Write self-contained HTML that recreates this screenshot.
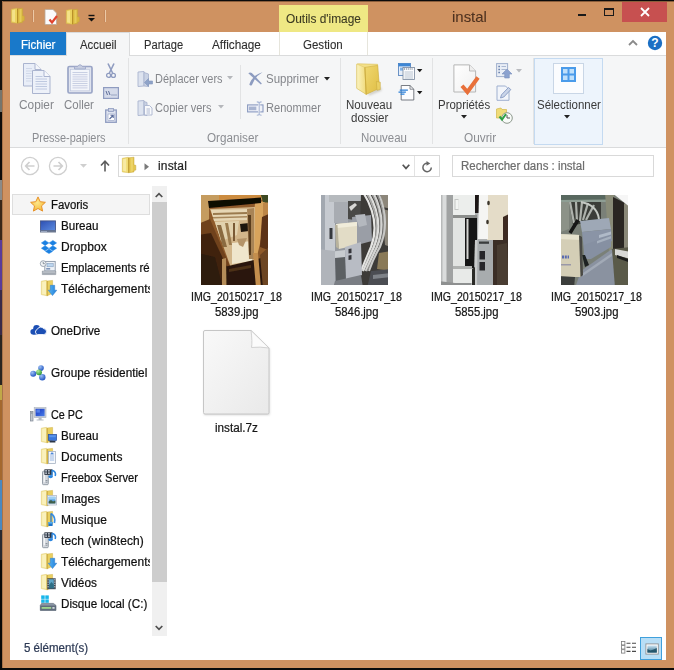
<!DOCTYPE html>
<html lang="fr">
<head>
<meta charset="utf-8">
<title>instal</title>
<style>
html,body{margin:0;padding:0;}
body{width:674px;height:670px;overflow:hidden;background:#0a0a0a;font-family:"Liberation Sans",sans-serif;font-size:12px;position:relative;}
.a{position:absolute;}
.t{position:absolute;white-space:nowrap;transform-origin:0 0;-webkit-text-stroke:0.22px;font-family:"Liberation Sans",sans-serif;}
svg{position:absolute;overflow:visible;}
#win{position:absolute;left:2px;top:1px;width:672px;height:667px;background:#cf9261;}
#client{position:absolute;left:10px;top:32px;width:656px;height:628px;background:#fff;overflow:hidden;}
</style>
</head>
<body>
<div id="desk" class="a" style="left:0;top:0;width:674px;height:670px;background:#0b0b0b">
<div class="a" style="left:0px;top:0px;width:2px;height:90px;background:#15100c;"></div>
<div class="a" style="left:0px;top:90px;width:2px;height:22px;background:#75756d;"></div>
<div class="a" style="left:0px;top:112px;width:2px;height:68px;background:#0e0c0a;"></div>
<div class="a" style="left:0px;top:180px;width:2px;height:20px;background:#8a8a88;"></div>
<div class="a" style="left:0px;top:200px;width:2px;height:40px;background:#3a2618;"></div>
<div class="a" style="left:0px;top:240px;width:2px;height:50px;background:#5a3a9a;"></div>
<div class="a" style="left:0px;top:290px;width:2px;height:45px;background:#3a2a48;"></div>
<div class="a" style="left:0px;top:335px;width:2px;height:50px;background:#2a2420;"></div>
<div class="a" style="left:0px;top:385px;width:2px;height:15px;background:#c0a848;"></div>
<div class="a" style="left:0px;top:400px;width:2px;height:80px;background:#a4682e;"></div>
<div class="a" style="left:0px;top:480px;width:2px;height:50px;background:#4a88c0;"></div>
<div class="a" style="left:0px;top:530px;width:2px;height:30px;background:#2a2a30;"></div>
<div class="a" style="left:0px;top:560px;width:2px;height:110px;background:#080808;"></div>
</div>
<div id="win"></div>
<div class="a" style="left:2px;top:1px;width:672px;height:1px;background:#8a5e3c;"></div>
<div class="a" style="left:2px;top:1px;width:1px;height:667px;background:#a8734a;"></div>
<div id="titlebar" class="a" style="left:0;top:0;width:674px;height:32px">
<svg class="a" style="left:11px;top:8px" width="13.5" height="15.5" viewBox="0 0 13.5 15.5" ><path d="M0.3 1.2 L5.9 0.3 L6.5 0.9 V15.2 L0.3 14.4 Z" fill="#ecd25e" stroke="#d2b64e" stroke-width="0.5"/>
<path d="M1.1 2.2 L4.0 1.4 V14.0 L1.1 13.3 Z" fill="#f4e288"/>
<path d="M6.5 0.8 L11.6 0.2 V7.8 L13.3 8.1 V12.7 L11.6 13.0 L11.6 14.4 L6.5 15.2 Z" fill="#d9b63e" stroke="#c6a63a" stroke-width="0.5"/>
<path d="M8.4 1.2 L10.5 0.9 V13.6 L8.4 14.4 Z" fill="#e6cc5a"/>
<path d="M6.5 0.8 V15.2" stroke="#b8902a" stroke-width="1"/></svg><div class="a" style="left:32px;top:10px;width:1px;height:12px;background:#c5875a"></div><div class="a" style="left:33px;top:10px;width:1px;height:12px;background:#ecc9a6"></div><svg class="a" style="left:44px;top:9px" width="14" height="16" viewBox="0 0 14 16" ><path d="M1 0.5 H9 L12.5 4 V15.5 H1 Z" fill="#fbfbfb" stroke="#b9a89a" stroke-width="0.8"/>
<path d="M5.5 10.5 L8 13.5 L13 7" stroke="#e0452f" stroke-width="2.2" fill="none"/></svg><svg class="a" style="left:65.5px;top:8.5px" width="13.5" height="15.5" viewBox="0 0 13.5 15.5" ><path d="M0.3 1.2 L5.9 0.3 L6.5 0.9 V15.2 L0.3 14.4 Z" fill="#ecd25e" stroke="#d2b64e" stroke-width="0.5"/>
<path d="M1.1 2.2 L4.0 1.4 V14.0 L1.1 13.3 Z" fill="#f4e288"/>
<path d="M6.5 0.8 L11.6 0.2 V7.8 L13.3 8.1 V12.7 L11.6 13.0 L11.6 14.4 L6.5 15.2 Z" fill="#d9b63e" stroke="#c6a63a" stroke-width="0.5"/>
<path d="M8.4 1.2 L10.5 0.9 V13.6 L8.4 14.4 Z" fill="#e6cc5a"/>
<path d="M6.5 0.8 V15.2" stroke="#b8902a" stroke-width="1"/></svg><svg class="a" style="left:88px;top:15px" width="7" height="7" viewBox="0 0 7 7" ><path d="M0.5 0.5 H6.5" stroke="#111" stroke-width="1.4"/><path d="M0 3 H7 L3.5 6.5 Z" fill="#111"/></svg><div class="a" style="left:104px;top:10px;width:1px;height:12px;background:#c5875a"></div><div class="a" style="left:105px;top:10px;width:1px;height:12px;background:#ecc9a6"></div>
<div class="a" style="left:279px;top:5px;width:89px;height:27px;background:#efe884;"></div>
<span class="t " style="left:286.0px;top:10.6px;font-size:12px;line-height:16px;color:#3c3a22;transform:scaleX(0.990);-webkit-text-stroke:0.1px;">Outils d'image</span>
<span class="t " style="left:452.0px;top:6.5px;font-size:15px;line-height:20px;color:#4e3220;transform:scaleX(0.997);-webkit-text-stroke:0.1px;">instal</span>
<div class="a" style="left:578px;top:14px;width:8px;height:2px;background:#1a1a1a;"></div>
<div class="a" style="left:604px;top:8px;width:10px;height:8px;box-sizing:border-box;border:1px solid #1a1a1a;border-top-width:2px;"></div>
<div class="a" style="left:622px;top:2px;width:45px;height:20px;background:#c75050;"></div>
<svg class="a" style="left:640px;top:7px" width="10" height="10" viewBox="0 0 10 10" ><path d="M1 1 L9 9 M9 1 L1 9" stroke="#fff" stroke-width="1.8" fill="none"/></svg>
</div>
<div id="client"></div>
<div id="tabs" class="a" style="left:0;top:0;width:674px;height:56px">
<div class="a" style="left:10px;top:32px;width:56px;height:23px;background:#1979ca;"></div>
<span class="t " style="left:21.1px;top:36.5px;font-size:12px;line-height:16px;color:#ffffff;transform:scaleX(0.955);">Fichier</span>
<div class="a" style="left:66px;top:32px;width:64px;height:24px;background:#f5f6f7;box-sizing:border-box;border:1px solid #dadbdc;border-bottom:none;"></div>
<span class="t " style="left:80.0px;top:37.0px;font-size:12px;line-height:16px;color:#2e2e2e;transform:scaleX(0.944);-webkit-text-stroke:0.1px;">Accueil</span>
<span class="t " style="left:144.0px;top:37.0px;font-size:12px;line-height:16px;color:#2e2e2e;transform:scaleX(0.930);-webkit-text-stroke:0.1px;">Partage</span>
<span class="t " style="left:212.0px;top:37.0px;font-size:12px;line-height:16px;color:#2e2e2e;transform:scaleX(0.982);-webkit-text-stroke:0.1px;">Affichage</span>
<div class="a" style="left:279px;top:32px;width:89px;height:23px;background:#ffffff;box-sizing:border-box;border-left:1px solid #e6e5dc;border-right:1px solid #e6e5dc;"></div>
<span class="t " style="left:303.2px;top:37.0px;font-size:12px;line-height:16px;color:#2e2e2e;transform:scaleX(0.960);-webkit-text-stroke:0.1px;">Gestion</span>
<svg class="a" style="left:628px;top:39px" width="10" height="7" viewBox="0 0 10 7" ><path d="M1 6 L5 2 L9 6" stroke="#8a8a8a" stroke-width="1.8" fill="none"/></svg>
<svg class="a" style="left:647px;top:35px" width="16" height="16" viewBox="0 0 16 16" ><circle cx="8" cy="8" r="7.2" fill="#1b6fc4"/><text x="8" y="12.4" font-family="Liberation Sans" font-weight="bold" font-size="12" fill="#fff" text-anchor="middle">?</text></svg>
</div>
<div id="ribbon" class="a" style="left:0;top:0;width:674px;height:148px">
<div class="a" style="left:10px;top:55px;width:656px;height:93px;background:#f5f6f7;box-sizing:border-box;border-top:1px solid #dadbdc;border-bottom:1px solid #dadbdc;"></div>
<div class="a" style="left:66px;top:55px;width:64px;height:1px;background:#f5f6f7;"></div>
<div class="a" style="left:66px;top:55px;width:1px;height:1px;background:#dadbdc;"></div>
<div class="a" style="left:129px;top:55px;width:1px;height:1px;background:#dadbdc;"></div>
<div class="a" style="left:128px;top:58px;width:1px;height:86px;background:#e2e3e4;"></div>
<div class="a" style="left:340px;top:58px;width:1px;height:86px;background:#e2e3e4;"></div>
<div class="a" style="left:432px;top:58px;width:1px;height:86px;background:#e2e3e4;"></div>
<div class="a" style="left:533px;top:58px;width:1px;height:86px;background:#e2e3e4;"></div>
<div class="a" style="left:240px;top:65px;width:1px;height:54px;background:#e2e3e4;"></div>
<svg class="a" style="left:23px;top:63px" width="28" height="31" viewBox="0 0 28 31" ><path d="M0.5 0.5 H12 L18 6.5 V23 H0.5 Z" fill="#e9eef8" stroke="#aab4cf" stroke-width="1"/>
<path d="M12 0.5 V6.5 H18" fill="#f4f6fb" stroke="#aab4cf" stroke-width="1"/>
<path d="M3 5.5 H9 M3 8 H9 M3 10.5 H8.5 M3 13 H8.5 M3 15.5 H8.5 M3 18 H8.5" stroke="#cdd5e6" stroke-width="0.9"/>
<path d="M9.5 7.5 H21 L27 13.5 V30.5 H9.5 Z" fill="#edf1f9" stroke="#aab4cf" stroke-width="1"/>
<path d="M21 7.5 V13.5 H27" fill="#f6f8fc" stroke="#aab4cf" stroke-width="1"/>
<path d="M12.5 13.5 H19.5 M12.5 16 H24 M12.5 18.5 H24 M12.5 21 H24 M12.5 23.5 H24 M12.5 26 H24" stroke="#b9c4dc" stroke-width="0.9"/></svg>
<svg class="a" style="left:67px;top:63px" width="26" height="31" viewBox="0 0 26 31" ><rect x="1" y="3.5" width="24" height="26.5" rx="1.5" fill="#dfe3ee" stroke="#9aa5c6" stroke-width="1.7"/>
<rect x="3.6" y="6.4" width="18.8" height="21.4" fill="#f3f5fa" stroke="#bcc5dc" stroke-width="0.6"/>
<path d="M5.5 9.5 H20.5 M5.5 11.7 H20.5 M5.5 13.9 H20.5 M5.5 16.1 H20.5 M5.5 18.3 H20.5 M5.5 20.5 H20.5 M5.5 22.7 H20.5 M5.5 24.9 H20.5" stroke="#c3cbe0" stroke-width="0.9"/>
<path d="M7.5 6 V3.6 H10.5 Q13 -0.2 15.5 3.6 H18.5 V6 Z" fill="#c6cde0" stroke="#9aa5c6" stroke-width="0.8"/></svg>
<svg class="a" style="left:105.5px;top:63px" width="10" height="16" viewBox="0 0 10 16" ><path d="M2 0.5 L6.6 10 M8 0.5 L3.4 10" stroke="#8f9cc0" stroke-width="1.6" fill="none"/>
<circle cx="2.6" cy="12.4" r="2" fill="none" stroke="#8f9cc0" stroke-width="1.3"/><circle cx="7.4" cy="12.4" r="2" fill="none" stroke="#8f9cc0" stroke-width="1.3"/></svg><svg class="a" style="left:103px;top:87px" width="16" height="12" viewBox="0 0 16 12" ><rect x="0.6" y="0.6" width="14.8" height="10.8" fill="#d5dbea" stroke="#8f9cc0" stroke-width="1.2"/>
<path d="M3 4 L4.5 8 M5.5 4 L7 8" stroke="#5f6f9a" stroke-width="1"/><path d="M8.5 8 H9.5 M10.5 8 H11.5 M12.5 8 H13.5" stroke="#5f6f9a" stroke-width="1"/></svg><svg class="a" style="left:105px;top:108px" width="12" height="15" viewBox="0 0 12 15" ><rect x="0.7" y="2" width="10.6" height="12.3" fill="#dfe4f0" stroke="#8f9cc0" stroke-width="1.3"/>
<rect x="3.5" y="0.5" width="5" height="3" fill="#cdd3e4" stroke="#8f9cc0" stroke-width="0.8"/>
<rect x="3" y="6" width="6.5" height="6.5" fill="#fff" stroke="#8f9cc0" stroke-width="0.6"/>
<path d="M4.5 11 L8 7.5 M5.5 7.3 H8.2 V10" stroke="#5a6c9c" stroke-width="1.1" fill="none"/></svg>
<span class="t " style="left:18.6px;top:97.0px;font-size:12px;line-height:16px;color:#84868b;transform:scaleX(0.987);-webkit-text-stroke:0;">Copier</span>
<span class="t " style="left:63.6px;top:97.0px;font-size:12px;line-height:16px;color:#84868b;transform:scaleX(0.954);-webkit-text-stroke:0;">Coller</span>
<span class="t " style="left:32.0px;top:130.0px;font-size:12px;line-height:16px;color:#8b8d92;transform:scaleX(0.911);-webkit-text-stroke:0;">Presse-papiers</span>
<svg class="a" style="left:137px;top:71px" width="16" height="16" viewBox="0 0 16 16" ><path d="M1 1 L7 0.5 V15 L1 15.5 Z" fill="#dde3ef" stroke="#aab4cf" stroke-width="0.9"/>
<path d="M7 1.5 L11.5 3 V15.5 L7 15 Z" fill="#c9d2e4" stroke="#aab4cf" stroke-width="0.9"/>
<path d="M15.5 10 H11.5 V7.5 L7.5 11.5 L11.5 15.5 V13 H15.5 Z" fill="#8fa3c8" stroke="#8296bd" stroke-width="0.6"/></svg><svg class="a" style="left:137px;top:100px" width="16" height="16" viewBox="0 0 16 16" ><path d="M1 1 L7 0.5 V15 L1 15.5 Z" fill="#dde3ef" stroke="#aab4cf" stroke-width="0.9"/>
<path d="M7 1.5 L10 2.5 V15.5 L7 15 Z" fill="#c9d2e4" stroke="#aab4cf" stroke-width="0.9"/>
<path d="M7.5 5.5 H12.5 L15 8 V15 H7.5 Z" fill="#f8f9fc" stroke="#aab4cf" stroke-width="0.9"/>
<path d="M9.5 9 H13 M9.5 11 H13 M9.5 13 H13" stroke="#9ca9c8" stroke-width="0.8"/></svg><svg class="a" style="left:248px;top:72px" width="15" height="14" viewBox="0 0 15 14" ><g fill="#8d9cc0"><path d="M0.3 1.3 Q1.8 0 3.8 1 Q8.4 5.4 13.8 11.6 L12.9 12.5 Q7 7.6 0.3 1.3 Z"/>
<path d="M14.5 0.3 Q9.6 3 6.4 8 Q5 11 3.8 13.2 Q2.2 14 1.3 12.6 Q3 7 8 3.2 Q11 1.1 14.5 0.3 Z"/></g></svg><svg class="a" style="left:247px;top:101px" width="17" height="15" viewBox="0 0 17 15" ><rect x="0.6" y="3.9" width="15.4" height="7" fill="#eef1f8" stroke="#8a9ac0" stroke-width="1.1"/>
<rect x="1.9" y="5.6" width="7.4" height="3.6" fill="#a8b4d0"/><rect x="11.1" y="3.2" width="2.2" height="8.4" fill="#f5f6f7"/>
<path d="M12.2 1.6 V13.6 M9.8 0.9 Q11.6 0.9 12.2 2 Q12.8 0.9 14.6 0.9 M9.8 14.3 Q11.6 14.3 12.2 13.2 Q12.8 14.3 14.6 14.3" stroke="#a9b7d6" stroke-width="1.1" fill="none"/></svg>
<span class="t " style="left:155.0px;top:71.0px;font-size:12px;line-height:16px;color:#84868b;transform:scaleX(0.912);-webkit-text-stroke:0;">Déplacer vers</span>
<span class="t " style="left:155.0px;top:100.0px;font-size:12px;line-height:16px;color:#84868b;transform:scaleX(0.921);-webkit-text-stroke:0;">Copier vers</span>
<svg class="a" style="left:227px;top:76px" width="6" height="4" viewBox="0 0 6 4" ><path d="M0 0 H6 L3 3.5 Z" fill="#b5b7bb"/></svg>
<svg class="a" style="left:218px;top:105px" width="6" height="4" viewBox="0 0 6 4" ><path d="M0 0 H6 L3 3.5 Z" fill="#b5b7bb"/></svg>
<span class="t " style="left:266.0px;top:71.0px;font-size:12px;line-height:16px;color:#84868b;transform:scaleX(0.956);-webkit-text-stroke:0;">Supprimer</span>
<span class="t " style="left:266.0px;top:100.0px;font-size:12px;line-height:16px;color:#84868b;transform:scaleX(0.925);-webkit-text-stroke:0;">Renommer</span>
<svg class="a" style="left:324px;top:77px" width="6" height="4" viewBox="0 0 6 4" ><path d="M0 0 H6 L3 3.5 Z" fill="#222"/></svg>
<span class="t " style="left:207.2px;top:129.8px;font-size:12px;line-height:16px;color:#8b8d92;transform:scaleX(0.974);-webkit-text-stroke:0;">Organiser</span>
<svg class="a" style="left:356px;top:63px" width="26" height="33" viewBox="0 0 26 33" ><defs><linearGradient id="nfa" x1="0" y1="0" x2="1" y2="0"><stop offset="0" stop-color="#fbf3c0"/><stop offset="1" stop-color="#f0da7a"/></linearGradient>
<linearGradient id="nfb" x1="0" y1="0" x2="1" y2="1"><stop offset="0" stop-color="#f0d870"/><stop offset="1" stop-color="#dfbd44"/></linearGradient>
<filter id="nfs" x="-20%" y="-20%" width="140%" height="140%"><feGaussianBlur stdDeviation="1"/></filter></defs>
<path d="M12 30.5 L25 24 L25.5 27.5 L13 32.5 Z" fill="#9a9484" opacity="0.45" filter="url(#nfs)"/>
<path d="M2.1 0.8 L21.6 1.3 L22.3 24.6 L10.2 31.3 L0.8 25.3 L0.8 1.1 Z" fill="#f3e08a" stroke="#d8bd58" stroke-width="0.6"/>
<path d="M0.8 1.1 L8.9 4.4 L10.2 31.3 L0.8 25.3 Z" fill="url(#nfa)" stroke="#dcc464" stroke-width="0.5"/>
<path d="M8.9 4.4 L21.6 2.4 L23.6 25.3 L10.2 31.3 Z" fill="url(#nfb)" stroke="#cfae40" stroke-width="0.6"/>
<path d="M20.3 18.5 L24.3 19.2 L24.3 26.6 L21 27.3 Z" fill="#ead064" stroke="#c7a638" stroke-width="0.5"/>
<path d="M8.9 4.4 L10.2 31.3" stroke="#c9a83c" stroke-width="0.8"/></svg><svg class="a" style="left:397.5px;top:62.5px" width="17" height="17" viewBox="0 0 17 17" ><rect x="0.4" y="0.4" width="12" height="12" fill="#e6eef9" stroke="#4a7ab8" stroke-width="0.8"/><rect x="0.4" y="0.4" width="12" height="3" fill="#3d86d4"/>
<rect x="2" y="4.6" width="3" height="3" fill="#7fb2e6"/>
<rect x="5" y="4.5" width="11.4" height="12" fill="#fbfcfe" stroke="#76859c" stroke-width="0.8"/>
<path d="M6 6 H15.4" stroke="#5a6676" stroke-width="1.2" stroke-dasharray="1 0.9"/>
<path d="M6.6 9 H15 M6.6 11 H15 M6.6 13 H15 M6.6 15 H15" stroke="#aab6c6" stroke-width="0.8"/></svg><svg class="a" style="left:416.5px;top:69px" width="6" height="4" viewBox="0 0 6 4" ><path d="M0 0 H5.4 L2.7 3.2 Z" fill="#1a1a1a"/></svg><svg class="a" style="left:398px;top:84.5px" width="16.5" height="16" viewBox="0 0 16.5 16" ><path d="M3.2 0.5 H12 L15.8 4.2 V15 H3.2 Z" fill="#fdfdfe" stroke="#6a6e76" stroke-width="0.9"/><path d="M12 0.5 V4.2 H15.8" fill="none" stroke="#6a6e76" stroke-width="0.8"/>
<path d="M1.8 5.1 H9.9 M0.5 7.1 H7.9 M2.5 9.1 H6.5" stroke="#2a7fd8" stroke-width="1.2"/></svg><svg class="a" style="left:416.5px;top:91px" width="6" height="4" viewBox="0 0 6 4" ><path d="M0 0 H5.4 L2.7 3.2 Z" fill="#1a1a1a"/></svg>
<span class="t " style="left:346.0px;top:97.0px;font-size:12px;line-height:16px;color:#3a3a3a;transform:scaleX(0.960);-webkit-text-stroke:0;">Nouveau</span>
<span class="t " style="left:350.6px;top:109.6px;font-size:12px;line-height:16px;color:#3a3a3a;transform:scaleX(0.964);-webkit-text-stroke:0;">dossier</span>
<span class="t " style="left:360.6px;top:130.0px;font-size:12px;line-height:16px;color:#8b8d92;transform:scaleX(0.956);-webkit-text-stroke:0;">Nouveau</span>
<svg class="a" style="left:453px;top:64px" width="27" height="31" viewBox="0 0 27 31" ><defs><linearGradient id="prg" x1="0" y1="0" x2="1" y2="1"><stop offset="0" stop-color="#ffffff"/><stop offset="1" stop-color="#f0f0f0"/></linearGradient></defs>
<path d="M0.9 0.9 H16.5 L22.6 7 V28 H0.9 Z" fill="url(#prg)" stroke="#b6b6b6" stroke-width="1"/>
<path d="M16.5 0.9 V7 H22.6" fill="#eeeeee" stroke="#b6b6b6" stroke-width="0.9"/>
<path d="M9 21.8 L14.4 28 L25 13.5" stroke="#e8703a" stroke-width="4" fill="none"/></svg><svg class="a" style="left:496px;top:63px" width="17" height="16" viewBox="0 0 17 16" ><rect x="0.6" y="0.6" width="11" height="13" fill="#e9eef6" stroke="#9fb0cd" stroke-width="1"/>
<path d="M2.3 3.5 H4 M2.3 6.5 H4 M2.3 9.5 H4" stroke="#6f86b0" stroke-width="1.4"/><path d="M5.5 3.5 H10 M5.5 6.5 H10" stroke="#aab8d2" stroke-width="1"/>
<path d="M11 6 L16 11 H13.3 V15 H8.7 V11 H6 Z" fill="#8ba2cf" stroke="#7a90be" stroke-width="0.6"/></svg><svg class="a" style="left:516px;top:69px" width="6" height="4" viewBox="0 0 6 4" ><path d="M0 0 H6 L3 3.5 Z" fill="#b9bbbf"/></svg><svg class="a" style="left:496px;top:85px" width="16" height="16" viewBox="0 0 16 16" ><path d="M1 1 H9.5 L13 4.5 V15.3 H1 Z" fill="#f2f5fa" stroke="#9eb0cf" stroke-width="1"/>
<path d="M4.5 13 L5.5 9.8 L12.5 2.5 L14.8 4.6 L7.8 12 Z" fill="#c9d4e8" stroke="#8499c2" stroke-width="0.9"/></svg><svg class="a" style="left:496px;top:107px" width="17" height="17" viewBox="0 0 17 17" ><path d="M0.5 2 L5 1 L6 2.5 H10.5 V11 H0.5 Z" fill="#f0dc78" stroke="#d3b84c" stroke-width="0.7"/>
<circle cx="11" cy="11" r="5.3" fill="#f8fbf8" stroke="#8f9a8f" stroke-width="1"/>
<path d="M11 8 V11 H14" stroke="#555" stroke-width="1" fill="none"/>
<path d="M3.5 9.5 L6 12.5 L10 7" stroke="#2ea043" stroke-width="2" fill="none"/></svg>
<span class="t " style="left:438.0px;top:97.0px;font-size:12px;line-height:16px;color:#3a3a3a;transform:scaleX(0.953);-webkit-text-stroke:0;">Propriétés</span>
<svg class="a" style="left:461px;top:115px" width="6" height="4" viewBox="0 0 6 4" ><path d="M0 0 H6 L3 3.5 Z" fill="#222"/></svg>
<span class="t " style="left:464.0px;top:129.8px;font-size:12px;line-height:16px;color:#8b8d92;transform:scaleX(0.983);-webkit-text-stroke:0;">Ouvrir</span>
<div class="a" style="left:534px;top:58px;width:69px;height:87px;background:#edf4fc;box-sizing:border-box;border:1px solid #c4daf1;"></div>
<div class="a" style="left:553px;top:63px;width:31px;height:31px;background:#fbfcfe;box-sizing:border-box;border:1px solid #c9d6e6;"></div>
<svg class="a" style="left:561px;top:67px" width="15" height="15" viewBox="0 0 15 15" ><rect x="0" y="0" width="15" height="15" fill="#4a9bea"/>
<rect x="2" y="2" width="4.5" height="4.5" fill="#bfe0fb"/><rect x="8.5" y="2" width="4.5" height="4.5" fill="#bfe0fb"/>
<rect x="2" y="8.5" width="4.5" height="4.5" fill="#bfe0fb"/><rect x="8.5" y="8.5" width="4.5" height="4.5" fill="#bfe0fb"/></svg>
<span class="t " style="left:536.6px;top:97.0px;font-size:12px;line-height:16px;color:#3a3a3a;transform:scaleX(0.958);-webkit-text-stroke:0;">Sélectionner</span>
<svg class="a" style="left:564px;top:115px" width="6" height="4" viewBox="0 0 6 4" ><path d="M0 0 H6 L3 3.5 Z" fill="#222"/></svg>
</div>
<div id="addr" class="a" style="left:0;top:0;width:674px;height:186px">
<svg class="a" style="left:20px;top:156px" width="20" height="20" viewBox="0 0 20 20" ><circle cx="10" cy="10" r="8.6" fill="none" stroke="#cfcfcf" stroke-width="1.3"/>
<path d="M14.5 10 H6 M9.5 6 L5.7 10 L9.5 14" stroke="#cfcfcf" stroke-width="1.7" fill="none"/></svg><svg class="a" style="left:48px;top:156px" width="20" height="20" viewBox="0 0 20 20" ><circle cx="10" cy="10" r="8.6" fill="none" stroke="#cfcfcf" stroke-width="1.3"/>
<path d="M5.5 10 H14 M10.5 6 L14.3 10 L10.5 14" stroke="#cfcfcf" stroke-width="1.7" fill="none"/></svg><svg class="a" style="left:80px;top:164px" width="7" height="4" viewBox="0 0 7 4" ><path d="M0 0 H7 L3.5 3.8 Z" fill="#cfcfcf"/></svg><svg class="a" style="left:100px;top:160px" width="10" height="12" viewBox="0 0 10 12" ><path d="M5 11.5 V1.5 M1 5.5 L5 1.2 L9 5.5" stroke="#5c5c5c" stroke-width="1.6" fill="none"/></svg>
<div class="a" style="left:118px;top:155px;width:322px;height:22px;background:#fff;box-sizing:border-box;border:1px solid #d9d9d9;"></div>
<div class="a" style="left:414px;top:156px;width:1px;height:20px;background:#e3e3e3;"></div>
<svg class="a" style="left:122px;top:157px" width="14" height="16" viewBox="0 0 14 16" ><path d="M0.3 1.3 L6.2 0.3 L6.7 1.0 V15.7 L0.3 14.9 Z" fill="#f1dc74" stroke="#d2b64e" stroke-width="0.5"/>
<path d="M1.1 2.2 L4.2 1.4 V14.4 L1.1 13.8 Z" fill="#f8eaa4"/>
<path d="M6.7 0.8 L12.0 0.2 V8.0 L13.8 8.3 V13.1 L12.0 13.4 L12.0 14.9 L6.7 15.7 Z" fill="#e4c650" stroke="#c6a63a" stroke-width="0.5"/>
<path d="M8.7 1.3 L10.9 1.0 V14.1 L8.7 14.9 Z" fill="#ecd468"/>
<path d="M6.7 0.8 V15.7" stroke="#bf9a30" stroke-width="1"/></svg><svg class="a" style="left:144px;top:163px" width="6" height="8" viewBox="0 0 6 8" ><path d="M0.5 0.3 L5 3.8 L0.5 7.3 Z" fill="#7a7a7a"/></svg><svg class="a" style="left:402px;top:164px" width="8" height="6" viewBox="0 0 8 6" ><path d="M0.7 0.8 L4 4.4 L7.3 0.8" stroke="#555" stroke-width="1.7" fill="none"/></svg><svg class="a" style="left:422px;top:161px" width="11" height="12" viewBox="0 0 11 12" ><path d="M9.3 6.5 A4.2 4.2 0 1 1 5.5 2.3" stroke="#666" stroke-width="1.5" fill="none"/><path d="M4.5 0 L8.3 2.4 L4.5 4.8 Z" fill="#666"/></svg><svg class="a" style="left:634px;top:161px" width="12" height="12" viewBox="0 0 12 12" ><circle cx="7.3" cy="4.6" r="3.3" fill="none" stroke="#5a5a5a" stroke-width="1.5"/><path d="M5 7 L1 11" stroke="#5a5a5a" stroke-width="1.9"/></svg>
<span class="t " style="left:157.6px;top:157.6px;font-size:12px;line-height:16px;color:#1e1e1e;letter-spacing:0.18px;transform:scaleX(0.999);">instal</span>
<div class="a" style="left:452px;top:155px;width:202px;height:22px;background:#fff;box-sizing:border-box;border:1px solid #d9d9d9;"></div>
<span class="t " style="left:461.2px;top:157.6px;font-size:12px;line-height:16px;color:#6d6d6d;transform:scaleX(0.956);">Rechercher dans : instal</span>
</div>
<div id="nav" class="a" style="left:10px;top:186px;width:140px;height:450px;overflow:hidden">
<div class="a" style="left:-10px;top:-186px;width:674px;height:670px">
<div class="a" style="left:12px;top:194px;width:138px;height:21px;background:#f5f5f5;box-sizing:border-box;border:1px solid #dedede;"></div>
<span class="t " style="left:51.2px;top:196.5px;font-size:12px;line-height:16px;color:#101010;transform:scaleX(0.948);">Favoris</span>
<span class="t " style="left:60.6px;top:217.5px;font-size:12px;line-height:16px;color:#101010;transform:scaleX(0.969);">Bureau</span>
<span class="t " style="left:60.6px;top:238.5px;font-size:12px;line-height:16px;color:#101010;letter-spacing:0.09px;transform:scaleX(0.999);">Dropbox</span>
<span class="t " style="left:60.6px;top:259.5px;font-size:12px;line-height:16px;color:#101010;transform:scaleX(0.950);">Emplacements récents</span>
<span class="t " style="left:60.6px;top:280.5px;font-size:12px;line-height:16px;color:#101010;transform:scaleX(0.997);">Téléchargements</span>
<span class="t " style="left:51.2px;top:322.5px;font-size:12px;line-height:16px;color:#101010;transform:scaleX(0.973);">OneDrive</span>
<span class="t " style="left:51.2px;top:364.5px;font-size:12px;line-height:16px;color:#101010;transform:scaleX(0.982);">Groupe résidentiel</span>
<span class="t " style="left:51.2px;top:406.5px;font-size:12px;line-height:16px;color:#101010;transform:scaleX(0.897);">Ce PC</span>
<span class="t " style="left:60.6px;top:427.5px;font-size:12px;line-height:16px;color:#101010;transform:scaleX(0.969);">Bureau</span>
<span class="t " style="left:60.6px;top:448.5px;font-size:12px;line-height:16px;color:#101010;letter-spacing:0.10px;transform:scaleX(0.999);">Documents</span>
<span class="t " style="left:60.6px;top:469.5px;font-size:12px;line-height:16px;color:#101010;transform:scaleX(0.930);">Freebox Server</span>
<span class="t " style="left:60.6px;top:490.5px;font-size:12px;line-height:16px;color:#101010;transform:scaleX(0.989);">Images</span>
<span class="t " style="left:60.6px;top:511.5px;font-size:12px;line-height:16px;color:#101010;letter-spacing:0.09px;transform:scaleX(0.999);">Musique</span>
<span class="t " style="left:60.6px;top:532.5px;font-size:12px;line-height:16px;color:#101010;letter-spacing:0.11px;transform:scaleX(0.999);">tech (win8tech)</span>
<span class="t " style="left:60.6px;top:553.5px;font-size:12px;line-height:16px;color:#101010;transform:scaleX(0.997);">Téléchargements</span>
<span class="t " style="left:60.6px;top:574.5px;font-size:12px;line-height:16px;color:#101010;transform:scaleX(0.984);">Vidéos</span>
<span class="t " style="left:60.6px;top:595.5px;font-size:12px;line-height:16px;color:#101010;transform:scaleX(0.973);">Disque local (C:)</span>
<svg class="a" style="left:30px;top:195.5px" width="16" height="16" viewBox="0 0 16 16" ><defs><radialGradient id="stg" cx="0.45" cy="0.4" r="0.6"><stop offset="0" stop-color="#fde68a"/><stop offset="1" stop-color="#f6bb3a"/></radialGradient></defs>
<path d="M8 0.9 L10.2 5.7 L15.4 6.3 L11.5 9.9 L12.6 15.1 L8 12.5 L3.4 15.1 L4.5 9.9 L0.6 6.3 L5.8 5.7 Z" fill="url(#stg)" stroke="#e8932a" stroke-width="1"/></svg><svg class="a" style="left:40px;top:220px" width="16" height="13" viewBox="0 0 16 13" ><defs><linearGradient id="dk" x1="0" y1="0" x2="1" y2="1"><stop offset="0" stop-color="#2c4fb2"/><stop offset="1" stop-color="#5d8ce0"/></linearGradient></defs>
<rect x="0.5" y="0.9" width="15" height="9.6" fill="url(#dk)" stroke="#46588a" stroke-width="0.9"/><rect x="0" y="10.3" width="16" height="2.2" fill="#6c7890"/><rect x="1" y="11" width="6" height="0.8" fill="#a8b4cc"/></svg><svg class="a" style="left:40.5px;top:239.5px" width="16" height="14" viewBox="0 0 16 14" ><g fill="#1a80e2" stroke="#1a80e2" stroke-width="0.5" stroke-linejoin="round"><path d="M4.1 0.4 L7.8 2.9 L4.1 5.4 L0.4 2.9 Z"/><path d="M11.9 0.4 L15.6 2.9 L11.9 5.4 L8.2 2.9 Z"/><path d="M4.1 5.7 L7.8 8.2 L4.1 10.7 L0.4 8.2 Z"/><path d="M11.9 5.7 L15.6 8.2 L11.9 10.7 L8.2 8.2 Z"/><path d="M4.5 11.4 L8 9.1 L11.5 11.4 L8 13.6 Z"/></g></svg><svg class="a" style="left:40px;top:259.5px" width="16" height="16" viewBox="0 0 16 16" ><rect x="4.8" y="1.4" width="10.4" height="9.6" fill="#eef2f7" stroke="#8b97a6" stroke-width="0.9"/><rect x="7" y="3.4" width="6.2" height="3.4" fill="#bcd6ef" stroke="#7d95b5" stroke-width="0.5"/><rect x="6.2" y="8" width="4" height="1.6" fill="#7f95b8"/>
<path d="M2.3 11 H15.8 V14.6 H2.3 Z" fill="#a2a9b2" stroke="#868e98" stroke-width="0.5"/><path d="M3 12 H15" stroke="#d5d9de" stroke-width="0.8"/>
<circle cx="3.2" cy="3.6" r="2.9" fill="#f3f5f7" stroke="#8a95a3" stroke-width="0.8"/><path d="M3.2 1.9 V3.7 H4.8" stroke="#6c7885" stroke-width="0.8" fill="none"/></svg><svg class="a" style="left:41px;top:280.0px" width="12" height="16" viewBox="0 0 12 16" ><path d="M0.3 1.2 L5.6 0.3 L6.2 1 V15.8 L0.3 14.6 Z" fill="#f6e99a" stroke="#dcc568" stroke-width="0.5"/>
<path d="M1.2 2 L5 1.3 V14.6 L1.2 13.9 Z" fill="#faf1bc"/>
<path d="M6.2 1 L11.6 0.4 V13.2 L6.2 15.8 Z" fill="#e9cf60" stroke="#cfb046" stroke-width="0.5"/>
<path d="M6.2 1 V15.8" stroke="#c5a238" stroke-width="0.9"/></svg><svg class="a" style="left:47.5px;top:285.0px" width="9" height="11" viewBox="0 0 9 11" ><defs><linearGradient id="ar285" x1="0" y1="0" x2="1" y2="0"><stop offset="0" stop-color="#5ab4f4"/><stop offset="1" stop-color="#1f7fd8"/></linearGradient></defs><path d="M2.3 0.3 H6.7 V5.2 H8.8 L4.5 10.6 L0.2 5.2 H2.3 Z" fill="url(#ar285)" stroke="#2a78c8" stroke-width="0.5"/></svg><svg class="a" style="left:30px;top:324px" width="16.5" height="11" viewBox="0 0 16.5 11" ><g fill="#1c4fb4"><circle cx="3.2" cy="7.8" r="2.8"/><circle cx="6.6" cy="4.4" r="3.4"/><rect x="3.2" y="6" width="5" height="4.6"/></g>
<g fill="#1c4fb4" stroke="#fff" stroke-width="0.9"><path d="M7.6 10.6 A2.7 2.7 0 0 1 7.3 5.4 A3.6 3.6 0 0 1 13.6 4.6 A3 3 0 0 1 13.4 10.6 Z"/></g></svg><svg class="a" style="left:30px;top:365px" width="16" height="15.5" viewBox="0 0 16 15.5" ><defs><radialGradient id="gb" cx="0.35" cy="0.3" r="0.7"><stop offset="0" stop-color="#9cc0f4"/><stop offset="1" stop-color="#2558c4"/></radialGradient><radialGradient id="gg" cx="0.35" cy="0.3" r="0.7"><stop offset="0" stop-color="#b4ec9c"/><stop offset="1" stop-color="#2f9a3a"/></radialGradient></defs>
<path d="M3 8.7 L9 7.3 L11 3 M9 7.3 L12.2 12.2" stroke="#b9cdea" stroke-width="2.4" fill="none"/>
<circle cx="3.2" cy="8.8" r="3" fill="url(#gb)"/><circle cx="11" cy="3.1" r="2.8" fill="url(#gb)"/><circle cx="12.3" cy="12.2" r="3.2" fill="url(#gb)"/><circle cx="9" cy="7.3" r="2.9" fill="url(#gg)"/></svg><svg class="a" style="left:30px;top:407px" width="16.5" height="14.5" viewBox="0 0 16.5 14.5" ><defs><linearGradient id="pcs" x1="0" y1="0" x2="1" y2="1"><stop offset="0" stop-color="#1634c0"/><stop offset="1" stop-color="#4a7ee8"/></linearGradient></defs>
<rect x="4.2" y="0.6" width="11.8" height="10" fill="#cdd2da" stroke="#aab1bc" stroke-width="0.6"/><rect x="5.6" y="1.8" width="9" height="7.4" fill="url(#pcs)"/><rect x="6.3" y="2.4" width="3.6" height="3.2" fill="#5f8ff0" opacity="0.8"/>
<path d="M8.6 10.6 H11.6 V12.4 H13.6 V13.6 H6.6 V12.4 H8.6 Z" fill="#b4bbc5"/><rect x="0.4" y="4.4" width="2.6" height="9.6" fill="#c2c8d0" stroke="#7f8894" stroke-width="0.7"/><path d="M1 6 H2.4" stroke="#5e6874" stroke-width="0.7"/></svg><svg class="a" style="left:41px;top:427px" width="12" height="16" viewBox="0 0 12 16" ><path d="M0.3 1.2 L5.6 0.3 L6.2 1 V15.8 L0.3 14.6 Z" fill="#f6e99a" stroke="#dcc568" stroke-width="0.5"/>
<path d="M1.2 2 L5 1.3 V14.6 L1.2 13.9 Z" fill="#faf1bc"/>
<path d="M6.2 1 L11.6 0.4 V13.2 L6.2 15.8 Z" fill="#e9cf60" stroke="#cfb046" stroke-width="0.5"/>
<path d="M6.2 1 V15.8" stroke="#c5a238" stroke-width="0.9"/></svg><svg class="a" style="left:47.5px;top:434px" width="9" height="9" viewBox="0 0 9 9" ><rect x="0.4" y="0.4" width="8.2" height="6" fill="#3a78dc" stroke="#2a4f9c" stroke-width="0.7"/><rect x="1.2" y="1.2" width="6.6" height="2" fill="#5b95ea"/><rect x="1.6" y="6.9" width="5.8" height="1.6" fill="#2c3646"/></svg><svg class="a" style="left:41px;top:448px" width="12" height="16" viewBox="0 0 12 16" ><path d="M0.3 1.2 L5.6 0.3 L6.2 1 V15.8 L0.3 14.6 Z" fill="#f6e99a" stroke="#dcc568" stroke-width="0.5"/>
<path d="M1.2 2 L5 1.3 V14.6 L1.2 13.9 Z" fill="#faf1bc"/>
<path d="M6.2 1 L11.6 0.4 V13.2 L6.2 15.8 Z" fill="#e9cf60" stroke="#cfb046" stroke-width="0.5"/>
<path d="M6.2 1 V15.8" stroke="#c5a238" stroke-width="0.9"/></svg><svg class="a" style="left:47.5px;top:450.5px" width="8" height="13" viewBox="0 0 8 13" ><rect x="0.4" y="0.4" width="7.2" height="12" fill="#f9fbfd" stroke="#9aa7ba" stroke-width="0.7"/><path d="M1.8 3 H6.2 M1.8 5 H6.2 M1.8 7 H6.2 M1.8 9 H6.2" stroke="#7fa3d8" stroke-width="0.8"/><rect x="3" y="1.6" width="2.2" height="1.6" fill="#4a86d8"/></svg><svg class="a" style="left:42px;top:469.0px" width="15" height="16.5" viewBox="0 0 15 16.5" ><rect x="0.5" y="2.2" width="5.8" height="13.5" rx="1" fill="#d4d8de" stroke="#808a96" stroke-width="0.8"/><rect x="1.6" y="4" width="1.4" height="9" fill="#f2f4f6"/><path d="M3.6 11.5 H5.4 M3.6 13.2 H5.4" stroke="#6d7680" stroke-width="0.7"/>
<rect x="2.4" y="0.3" width="8" height="5.6" fill="#2e3744"/><path d="M3.2 1.6 H5 M3.2 3 H5 M3.2 4.4 H5 M6 1.6 H7.8 M6 3 H7.8 M6 4.4 H7.8" stroke="#dfe7f2" stroke-width="0.8"/>
<path d="M10 1.2 V7.4" stroke="#2b86e0" stroke-width="1.3" fill="none"/><path d="M10 1.2 Q14.6 2.6 13.2 7" stroke="#2b86e0" stroke-width="1.6" fill="none"/><ellipse cx="8.6" cy="7.6" rx="2.2" ry="1.6" fill="#2b86e0"/></svg><svg class="a" style="left:41px;top:490px" width="12" height="16" viewBox="0 0 12 16" ><path d="M0.3 1.2 L5.6 0.3 L6.2 1 V15.8 L0.3 14.6 Z" fill="#f6e99a" stroke="#dcc568" stroke-width="0.5"/>
<path d="M1.2 2 L5 1.3 V14.6 L1.2 13.9 Z" fill="#faf1bc"/>
<path d="M6.2 1 L11.6 0.4 V13.2 L6.2 15.8 Z" fill="#e9cf60" stroke="#cfb046" stroke-width="0.5"/>
<path d="M6.2 1 V15.8" stroke="#c5a238" stroke-width="0.9"/></svg><svg class="a" style="left:46.5px;top:494.5px" width="10" height="10.5" viewBox="0 0 10 10.5" ><rect x="0.4" y="0.4" width="9.2" height="9.6" fill="#f2f5f9" stroke="#a8b2c2" stroke-width="0.7"/><rect x="1.6" y="1.8" width="6.8" height="6.6" fill="#5aa0e0"/><rect x="1.6" y="1.8" width="6.8" height="2.6" fill="#9fd0f4"/><path d="M1.6 8.4 L1.6 6.4 L4 5 L6 6.4 L8.4 5.4 V8.4 Z" fill="#3f5f4a"/></svg><svg class="a" style="left:41px;top:511px" width="12" height="16" viewBox="0 0 12 16" ><path d="M0.3 1.2 L5.6 0.3 L6.2 1 V15.8 L0.3 14.6 Z" fill="#f6e99a" stroke="#dcc568" stroke-width="0.5"/>
<path d="M1.2 2 L5 1.3 V14.6 L1.2 13.9 Z" fill="#faf1bc"/>
<path d="M6.2 1 L11.6 0.4 V13.2 L6.2 15.8 Z" fill="#e9cf60" stroke="#cfb046" stroke-width="0.5"/>
<path d="M6.2 1 V15.8" stroke="#c5a238" stroke-width="0.9"/></svg><svg class="a" style="left:47.5px;top:512.5px" width="8" height="13.5" viewBox="0 0 8 13.5" ><path d="M3 0.5 Q8 4 6.4 10" stroke="#3a90e6" stroke-width="1.7" fill="none"/><path d="M3 0.5 V10.5" stroke="#2a7ad0" stroke-width="1.3"/><path d="M0.4 9 H4.6 V13 H0.4 Z" fill="#1f74cc"/><path d="M0.4 9 H4.6 V10.6 H0.4 Z" fill="#56b0f0"/></svg><svg class="a" style="left:42px;top:532.0px" width="15" height="16.5" viewBox="0 0 15 16.5" ><rect x="0.5" y="2.2" width="5.8" height="13.5" rx="1" fill="#d4d8de" stroke="#808a96" stroke-width="0.8"/><rect x="1.6" y="4" width="1.4" height="9" fill="#f2f4f6"/><path d="M3.6 11.5 H5.4 M3.6 13.2 H5.4" stroke="#6d7680" stroke-width="0.7"/>
<rect x="2.4" y="0.3" width="8" height="5.6" fill="#2e3744"/><path d="M3.2 1.6 H5 M3.2 3 H5 M3.2 4.4 H5 M6 1.6 H7.8 M6 3 H7.8 M6 4.4 H7.8" stroke="#dfe7f2" stroke-width="0.8"/>
<path d="M10 1.2 V7.4" stroke="#2b86e0" stroke-width="1.3" fill="none"/><path d="M10 1.2 Q14.6 2.6 13.2 7" stroke="#2b86e0" stroke-width="1.6" fill="none"/><ellipse cx="8.6" cy="7.6" rx="2.2" ry="1.6" fill="#2b86e0"/></svg><svg class="a" style="left:41px;top:553.0px" width="12" height="16" viewBox="0 0 12 16" ><path d="M0.3 1.2 L5.6 0.3 L6.2 1 V15.8 L0.3 14.6 Z" fill="#f6e99a" stroke="#dcc568" stroke-width="0.5"/>
<path d="M1.2 2 L5 1.3 V14.6 L1.2 13.9 Z" fill="#faf1bc"/>
<path d="M6.2 1 L11.6 0.4 V13.2 L6.2 15.8 Z" fill="#e9cf60" stroke="#cfb046" stroke-width="0.5"/>
<path d="M6.2 1 V15.8" stroke="#c5a238" stroke-width="0.9"/></svg><svg class="a" style="left:47.5px;top:558.0px" width="9" height="11" viewBox="0 0 9 11" ><defs><linearGradient id="ar558" x1="0" y1="0" x2="1" y2="0"><stop offset="0" stop-color="#5ab4f4"/><stop offset="1" stop-color="#1f7fd8"/></linearGradient></defs><path d="M2.3 0.3 H6.7 V5.2 H8.8 L4.5 10.6 L0.2 5.2 H2.3 Z" fill="url(#ar558)" stroke="#2a78c8" stroke-width="0.5"/></svg><svg class="a" style="left:41px;top:574px" width="12" height="16" viewBox="0 0 12 16" ><path d="M0.3 1.2 L5.6 0.3 L6.2 1 V15.8 L0.3 14.6 Z" fill="#f6e99a" stroke="#dcc568" stroke-width="0.5"/>
<path d="M1.2 2 L5 1.3 V14.6 L1.2 13.9 Z" fill="#faf1bc"/>
<path d="M6.2 1 L11.6 0.4 V13.2 L6.2 15.8 Z" fill="#e9cf60" stroke="#cfb046" stroke-width="0.5"/>
<path d="M6.2 1 V15.8" stroke="#c5a238" stroke-width="0.9"/></svg><svg class="a" style="left:46.5px;top:578px" width="9" height="11.5" viewBox="0 0 9 11.5" ><rect x="0.3" y="0.3" width="8.4" height="10.9" fill="#343c48"/><rect x="2" y="1.2" width="4.8" height="9" fill="#5fa6c8"/><path d="M2 7 L4.4 4 L6.8 6.4 V10.2 H2 Z" fill="#2f6f86"/><path d="M1.1 1.2 V10.6 M7.8 1.2 V10.6" stroke="#e6ebf0" stroke-width="0.9" stroke-dasharray="1.3 1"/></svg><svg class="a" style="left:40px;top:595px" width="16.5" height="16" viewBox="0 0 16.5 16" ><g fill="#17b6ea"><rect x="1.2" y="0.4" width="3.5" height="3.5"/><rect x="5.3" y="0.4" width="3.5" height="3.5"/><rect x="1.2" y="4.4" width="3.5" height="3.4"/><rect x="5.3" y="4.4" width="3.5" height="3.4"/></g>
<path d="M1.6 8.4 H13.4 L16 10.4 V15.4 H0.3 V10.4 Z" fill="#8995a4" stroke="#56626f" stroke-width="0.6"/><path d="M0.3 10.6 H16 V15.4 H0.3 Z" fill="#5f6c7b"/><rect x="1.6" y="12" width="9.6" height="1.8" fill="#9fd48c"/><rect x="12.4" y="12" width="2.2" height="1.8" fill="#cfd6de"/></svg>
</div></div>
<div id="navscroll" class="a" style="left:0;top:0;width:674px;height:670px">
<div class="a" style="left:151.5px;top:186px;width:15px;height:450px;background:#f0f0f0;"></div>
<div class="a" style="left:151.5px;top:202px;width:15px;height:380px;background:#cdcdcd;"></div>
<svg class="a" style="left:155px;top:192px" width="8" height="6" viewBox="0 0 8 6" ><path d="M0.7 5 L4 1.6 L7.3 5" stroke="#505050" stroke-width="1.7" fill="none"/></svg>
<svg class="a" style="left:155px;top:625px" width="8" height="6" viewBox="0 0 8 6" ><path d="M0.7 1 L4 4.4 L7.3 1" stroke="#505050" stroke-width="1.7" fill="none"/></svg>
</div>
<div id="files" class="a" style="left:0;top:0;width:674px;height:670px">
<svg class="a" style="left:201px;top:195px;overflow:hidden" width="67" height="90" viewBox="0 0 67 90"><defs><filter id="pb0" x="-5%" y="-5%" width="110%" height="110%"><feGaussianBlur stdDeviation="0.7"/></filter><clipPath id="pc0"><rect x="0" y="0" width="67" height="90"/></clipPath></defs><g clip-path="url(#pc0)"><g filter="url(#pb0)"><rect x="-3" y="-3" width="73" height="96" fill="#8e5a2a"/><path d="M-3 -3 L70 -3 L70 4 L8 8 L8 26 L-3 29 Z" fill="#c59c5e"/><path d="M18 -3 L62 -3 L62 3 L18 5 Z" fill="#cc8c40"/><path d="M-3 29 L9 24 L31 76 L-3 62 Z" fill="#70421e"/><path d="M-3 40 L10 38 L26 72 L22 93 L-3 93 Z" fill="#40240f"/><path d="M-3 58 L14 62 L22 93 L-3 93 Z" fill="#2e1a0e"/><path d="M54 8 L64 6 L61 40 L54 70 L51 40 Z" fill="#d8a45c"/><path d="M62 8 L70 6 L70 22 L62 24 Z" fill="#bd8646"/><path d="M61 22 L70 18 L70 56 L59 52 Z" fill="#5c3218"/><path d="M59 -3 L70 -3 L70 8 L62 7 Z" fill="#3c4822"/><path d="M9 14 L54 12 L53 66 L30 73 Z" fill="#d2b68a"/><path d="M10 15 L47 14 L46 25 L13 26 Z" fill="#e6d6b4"/><path d="M12 18 L46 17 L46 19 L12 20 Z" fill="#9a7a4e"/><path d="M12 22 L46 21 L46 22.5 L12 23.5 Z" fill="#a8885c"/><path d="M14 27 L38 26 L36 40 L20 46 Z" fill="#e2d2ae"/><path d="M16 30 L20 30 L26 52 L22 52 Z" fill="#8a6a40"/><path d="M24 28 L27 28 L31 50 L28 50 Z" fill="#9c7c50"/><path d="M32 28 L34 28 L34 46 L32 46 Z" fill="#7a5a36"/><path d="M31 48 L51 46 L51 66 L31 69 Z" fill="#efe6cc"/><path d="M36 44 L46 43 L42 52 L38 50 Z" fill="#b49468"/><path d="M39 29 L48 28 L48 36 L40 37 Z" fill="#1c120a"/><path d="M46 14 L53 13 L53 64 L48 64 Z" fill="#a88456"/><path d="M47 20 L50 20 L50 60 L48 60 Z" fill="#5a3c1e"/><path d="M7 6 L60 2.5 L60 8 L8 13 Z" fill="#100804"/><path d="M23 72 L53 65 L70 60 L70 93 L22 93 Z" fill="#2a180c"/><path d="M21 64 L25 63 L25.5 93 L21 93 Z" fill="#b48c58"/><path d="M52 58 L57 58 L60 93 L55 93 Z" fill="#c48e4e"/><path d="M59 60 L70 50 L70 93 L62 93 Z" fill="#6c4424"/><path d="M28 74 L50 70 L50 73 L28 77 Z" fill="#4e3018"/></g></g></svg>
<span class="t " style="left:190.6px;top:288.6px;font-size:12px;line-height:16px;color:#161616;transform:scaleX(0.885);">IMG_20150217_18</span>
<span class="t " style="left:214.8px;top:303.5px;font-size:12px;line-height:16px;color:#161616;transform:scaleX(0.943);">5839.jpg</span>
<svg class="a" style="left:321px;top:195px;overflow:hidden" width="67" height="90" viewBox="0 0 67 90"><defs><filter id="pb1" x="-5%" y="-5%" width="110%" height="110%"><feGaussianBlur stdDeviation="0.7"/></filter><clipPath id="pc1"><rect x="0" y="0" width="67" height="90"/></clipPath></defs><g clip-path="url(#pc1)"><g filter="url(#pb1)"><rect x="-3" y="-3" width="73" height="96" fill="#969aa0"/><path d="M-3 -3 L5 -3 L5 93 L-3 93 Z" fill="#a2a8b0"/><path d="M4 -3 L14 -3 L14 93 L4 93 Z" fill="#c6cad0"/><path d="M8 -3 L41 -3 L41 7 L8 7 Z" fill="#b6babe"/><path d="M13 7 L27 7 L27 28 L13 28 Z" fill="#a8acb2"/><path d="M27 6 L42 6 L40 26 L27 24 Z" fill="#484846"/><path d="M28 12 L34 8 L36 10 L30 16 Z" fill="#d8d8d6"/><path d="M40 -3 L70 -3 L70 93 L38 93 Z" fill="#3c3a38"/><path d="M59 -3 L70 -3 L70 14 L62 12 Z" fill="#8c867a"/><path d="M61 14 L70 16 L70 52 L64 50 Z" fill="#8a8478"/><path d="M58 58 L70 56 L70 76 L56 74 Z" fill="#8a7a58"/><path d="M50 76 L70 74 L70 93 L46 93 Z" fill="#4c4e52"/><path d="M52 80 L70 78 L70 82 L52 84 Z" fill="#7e8288"/><path d="M42 -3 Q60 26 50 52 Q45 64 40 76" stroke="#e6e6e4" stroke-width="2.2" fill="none"/><path d="M45 -3 Q62 26 52 52 Q46 64 42 76" stroke="#a9a9a7" stroke-width="1.6" fill="none"/><path d="M47 -3 Q64 26 53 52 Q48 64 42 76" stroke="#dededc" stroke-width="2.2" fill="none"/><path d="M50 -3 Q66 26 55 52 Q49 64 44 76" stroke="#9c9c9a" stroke-width="1.4" fill="none"/><path d="M52 -3 Q67 26 56 52 Q50 64 45 76" stroke="#d4d4d2" stroke-width="2.2" fill="none"/><path d="M55 -3 Q69 26 58 52 Q52 64 46 76" stroke="#8e8e8c" stroke-width="1.2" fill="none"/><path d="M57 -3 Q70 26 59 52 Q52 64 48 76" stroke="#c8c8c6" stroke-width="2" fill="none"/><path d="M31 22 L50 20 L51 46 L36 50 L32 44 Z" fill="#9a9ea6"/><path d="M34 20 L44 19 L46 30 L38 32 Z" fill="#b4b8be"/><path d="M15 29 L36 27 L36 50 L18 54 Z" fill="#e2dcc6"/><path d="M15 29 L36 27 L36 31 L16 33 Z" fill="#f0ecda"/><path d="M14 30 L16.5 30 L18 54 L15 52 Z" fill="#b8b29c"/><path d="M8.5 33 L11.5 33 L11.5 44 L8.5 44 Z" fill="#36383c"/><path d="M24 52 L40 47 L41 80 L25 86 Z" fill="#b8bcc4"/><path d="M27.5 54 L30.5 53.5 L30.5 58 L27.5 58.5 Z" fill="#34363a"/><path d="M27.5 60.5 L30.5 60 L30.5 64.5 L27.5 65 Z" fill="#34363a"/><path d="M8 57 L24 55 L24 63 L8 64 Z" fill="#c8ccd0"/><path d="M14 63 L24 62 L25 86 L15 88 Z" fill="#5c6064"/><path d="M-3 54 L14 56 L14 93 L-3 93 Z" fill="#b0b4ba"/><path d="M14 86 L40 80 L42 93 L12 93 Z" fill="#7a7e84"/></g></g></svg>
<span class="t " style="left:310.6px;top:288.6px;font-size:12px;line-height:16px;color:#161616;transform:scaleX(0.885);">IMG_20150217_18</span>
<span class="t " style="left:334.9px;top:303.5px;font-size:12px;line-height:16px;color:#161616;transform:scaleX(0.943);">5846.jpg</span>
<svg class="a" style="left:441px;top:195px;overflow:hidden" width="67" height="90" viewBox="0 0 67 90"><defs><filter id="pb2" x="-5%" y="-5%" width="110%" height="110%"><feGaussianBlur stdDeviation="0.7"/></filter><clipPath id="pc2"><rect x="0" y="0" width="67" height="90"/></clipPath></defs><g clip-path="url(#pc2)"><g filter="url(#pb2)"><rect x="-3" y="-3" width="73" height="96" fill="#b0b2b2"/><path d="M-3 -3 L2 -3 L2 93 L-3 93 Z" fill="#b8baba"/><path d="M1.5 -3 L6 -3 L6 93 L1.5 93 Z" fill="#dadcdc"/><path d="M5.5 -3 L12 -3 L12 93 L5.5 93 Z" fill="#a0a2a2"/><path d="M12 -3 L34 -3 L34 20 L12 20 Z" fill="#eceeec"/><path d="M13.5 4 L17.5 4 L17.5 15 L13.5 15 Z" fill="#c4c6c4"/><path d="M14.5 5 L17.5 5 L17.5 14 L14.5 14 Z" fill="#f2f4f2"/><path d="M12 20 L36 20 L36 23 L12 23 Z" fill="#8c8e8c"/><path d="M12 23 L24 23 L24 71 L12 71 Z" fill="#e2e4e2"/><path d="M24 23 L36 23 L36 73 L24 73 Z" fill="#161412"/><path d="M25.5 24 L27.5 24 L27.5 64 L25.5 64 Z" fill="#d4d4d2"/><path d="M34 -3 L40 -3 L40 18 L34 18 Z" fill="#1a1816"/><path d="M12 71 L31 71 L31 88 L12 88 Z" fill="#e8eae8"/><path d="M12 71 L31 71 L31 74 L12 74 Z" fill="#b0b2b0"/><path d="M-3 86 L14 88 L30 88 L30 93 L-3 93 Z" fill="#8e9090"/><path d="M46 -3 L70 -3 L70 46 L46 45 Z" fill="#e4dcc8"/><path d="M62 22 L70 18 L70 45 L62 45 Z" fill="#3c2c22"/><path d="M38 -3 L47 -3 L47 44 L37 44 Z" fill="#f5f5f3"/><ellipse cx="47.5" cy="8" rx="1.3" ry="2.2" fill="#3a342c"/><ellipse cx="46.5" cy="27" rx="1.3" ry="2.2" fill="#3a342c"/><path d="M34 45 L52 45 L52 93 L33 93 Z" fill="#a8acae"/><path d="M38 46.5 L48 46.5 L48 48.8 L38 48.8 Z" fill="#3a3c3e"/><path d="M38.5 56 L44 56 L44 64.5 L38.5 64.5 Z" fill="#26282a"/><path d="M38.5 67 L44 67 L44 75.5 L38.5 75.5 Z" fill="#26282a"/><path d="M34 45 L36.5 45 L36 93 L33 93 Z" fill="#c8caca"/><path d="M52 45 L70 45 L70 93 L52 93 Z" fill="#3a2e26"/><path d="M56 50 L66 48 L68 93 L56 93 Z" fill="#4a3c30"/><path d="M31 74 L34 72 L34 93 L31 93 Z" fill="#2a2a28"/></g></g></svg>
<span class="t " style="left:430.6px;top:288.6px;font-size:12px;line-height:16px;color:#161616;transform:scaleX(0.885);">IMG_20150217_18</span>
<span class="t " style="left:454.9px;top:303.5px;font-size:12px;line-height:16px;color:#161616;transform:scaleX(0.943);">5855.jpg</span>
<svg class="a" style="left:561px;top:195px;overflow:hidden" width="67" height="90" viewBox="0 0 67 90"><defs><filter id="pb3" x="-5%" y="-5%" width="110%" height="110%"><feGaussianBlur stdDeviation="0.7"/></filter><clipPath id="pc3"><rect x="0" y="0" width="67" height="90"/></clipPath></defs><g clip-path="url(#pc3)"><g filter="url(#pb3)"><rect x="-3" y="-3" width="73" height="96" fill="#7a8078"/><path d="M-3 -3 L50 -3 L50 5.5 L-3 5.5 Z" fill="#58685e"/><path d="M-3 5 L46 4.5 L46 7 L-3 7 Z" fill="#8e9e94"/><path d="M-3 7 L8 7 L8 34 L-3 38 Z" fill="#8c9288"/><path d="M8 7 L40 7 L40 26 L12 30 Z" fill="#3a3e38"/><path d="M9 7 L13 28 M15 7 L16 27 M21 7 L19 26 M27 8 L22 25 M33 10 L25 25" stroke="#aeb2ac" stroke-width="2.2" fill="none"/><path d="M20 7 Q36 10 38 24" stroke="#c4c8c2" stroke-width="2" fill="none"/><path d="M17 25 L9 38" stroke="#141412" stroke-width="3.4" fill="none"/><path d="M44 -3 L53 -3 L52 56 L48 56 Z" fill="#8a8c78"/><path d="M52 2 L64 8 L64 56 L52 56 Z" fill="#2a2824"/><path d="M63 8 L70 12 L70 93 L63 93 Z" fill="#8a8878"/><path d="M50 -3 L70 -3 L70 13 Z" fill="#f6f6f6"/><path d="M50 54 L70 52 L70 93 L52 93 Z" fill="#5a5a4a"/><path d="M54 54 L70 57 L70 64 L54 60 Z" fill="#d8d8d6"/><path d="M56 60 L70 65 L70 68 L56 63 Z" fill="#1e1e1c"/><path d="M19 26 L48 23 L50 34 L21 37 Z" fill="#9ea8b6"/><path d="M21 37 L50 34 L51 46 L34 54 L23 56 Z" fill="#8a94a6"/><path d="M38 40 L50 36.5 L50 39.5 L38 43 Z" fill="#b0bac8"/><path d="M23 50 L50 40 L50 52 L30 64 L23 64 Z" fill="#8690a2"/><path d="M36 46 L50 41 L50 43.5 L36 48.5 Z" fill="#a6b0be"/><path d="M20 76 L51 54 L54 93 L14 93 Z" fill="#8a92a0"/><path d="M22 78 L51 58 L51 61 L22 81 Z" fill="#a2aab6"/><path d="M21 60 L24 60 L28 70 L24 72 Z" fill="#1e2020"/><path d="M-3 39 L19 40 L20 82 L-3 82 Z" fill="#d4ceb6"/><path d="M-3 39 L19 40 L19.5 45 L-3 44 Z" fill="#e6e2ce"/><path d="M18 40 L21 42 L22 80 L19.5 82 Z" fill="#4a4a44"/><path d="M1 62 H8" stroke="#5a6ab0" stroke-width="3" stroke-dasharray="2 0.8" fill="none"/><path d="M-3 69 L10 69 L10 70.5 L-3 70.5 Z" fill="#9a98a8"/><path d="M-3 81 L14 82 L13 93 L-3 93 Z" fill="#3a3c3a"/></g></g></svg>
<span class="t " style="left:550.6px;top:288.6px;font-size:12px;line-height:16px;color:#161616;transform:scaleX(0.885);">IMG_20150217_18</span>
<span class="t " style="left:574.9px;top:303.5px;font-size:12px;line-height:16px;color:#161616;transform:scaleX(0.943);">5903.jpg</span>
<svg class="a" style="left:200px;top:328px" width="74" height="92" viewBox="0 0 74 92" ><defs><linearGradient id="fi" x1="0" y1="0" x2="1" y2="1"><stop offset="0" stop-color="#f9f9f9"/><stop offset="1" stop-color="#e9e9e9"/></linearGradient>
<filter id="fsh" x="-10%" y="-10%" width="125%" height="125%"><feGaussianBlur stdDeviation="1.1"/></filter></defs>
<path d="M4 3.5 H51 L69.5 21 V87 H4 Z" fill="#9a9a9a" opacity="0.45" filter="url(#fsh)"/>
<path d="M5 2.5 H51 L69 20 V84.5 Q69 86 67.5 86 H5 Q3.5 86 3.5 84.5 V4 Q3.5 2.5 5 2.5 Z" fill="url(#fi)" stroke="#c6c6c6" stroke-width="1"/>
<path d="M51 2.5 Q52.5 14 51.5 19.5 Q60 18.5 69 20 Z" fill="#fbfbfb" stroke="#cdcdcd" stroke-width="0.9"/></svg>
<span class="t " style="left:215.2px;top:420.0px;font-size:12px;line-height:16px;color:#161616;transform:scaleX(0.975);">instal.7z</span>
</div>
<div id="status" class="a" style="left:0;top:0;width:674px;height:670px">
<span class="t " style="left:24.4px;top:640.0px;font-size:12px;line-height:16px;color:#2d3a55;transform:scaleX(0.961);">5 élément(s)</span>
<svg class="a" style="left:621px;top:641px" width="16" height="13" viewBox="0 0 16 13" ><g fill="#fff" stroke="#7a7a7a" stroke-width="0.8"><rect x="0.5" y="0.5" width="3.4" height="3.4"/><rect x="0.5" y="4.6" width="3.4" height="3.4"/><rect x="0.5" y="8.7" width="3.4" height="3.4"/></g>
<path d="M5.5 2.2 H9.5 M11 2.2 H15 M5.5 6.3 H9.5 M11 6.3 H15 M5.5 10.4 H9.5 M11 10.4 H15" stroke="#4a4a4a" stroke-width="1.1"/></svg><div class="a" style="left:640px;top:637px;width:22px;height:23px;box-sizing:border-box;background:#b8def6;border:1px solid #3fa0dc"></div><svg class="a" style="left:645px;top:643px" width="15" height="12" viewBox="0 0 15 12" ><defs><linearGradient id="vb" x1="0" y1="0" x2="0" y2="1"><stop offset="0" stop-color="#cfe6f5"/><stop offset="1" stop-color="#2d6d8c"/></linearGradient></defs>
<rect x="0.9" y="0.9" width="12.4" height="10.2" fill="#fdfdfd" stroke="#8c9094" stroke-width="0.9"/><rect x="2.4" y="2.4" width="9.4" height="7.2" fill="url(#vb)"/><path d="M2.4 9.6 L2.4 6 L5.5 7.6 L8.5 6.6 L11.8 5 V9.6 Z" fill="#1f4d63" opacity="0.85"/></svg>
</div>
</body>
</html>
